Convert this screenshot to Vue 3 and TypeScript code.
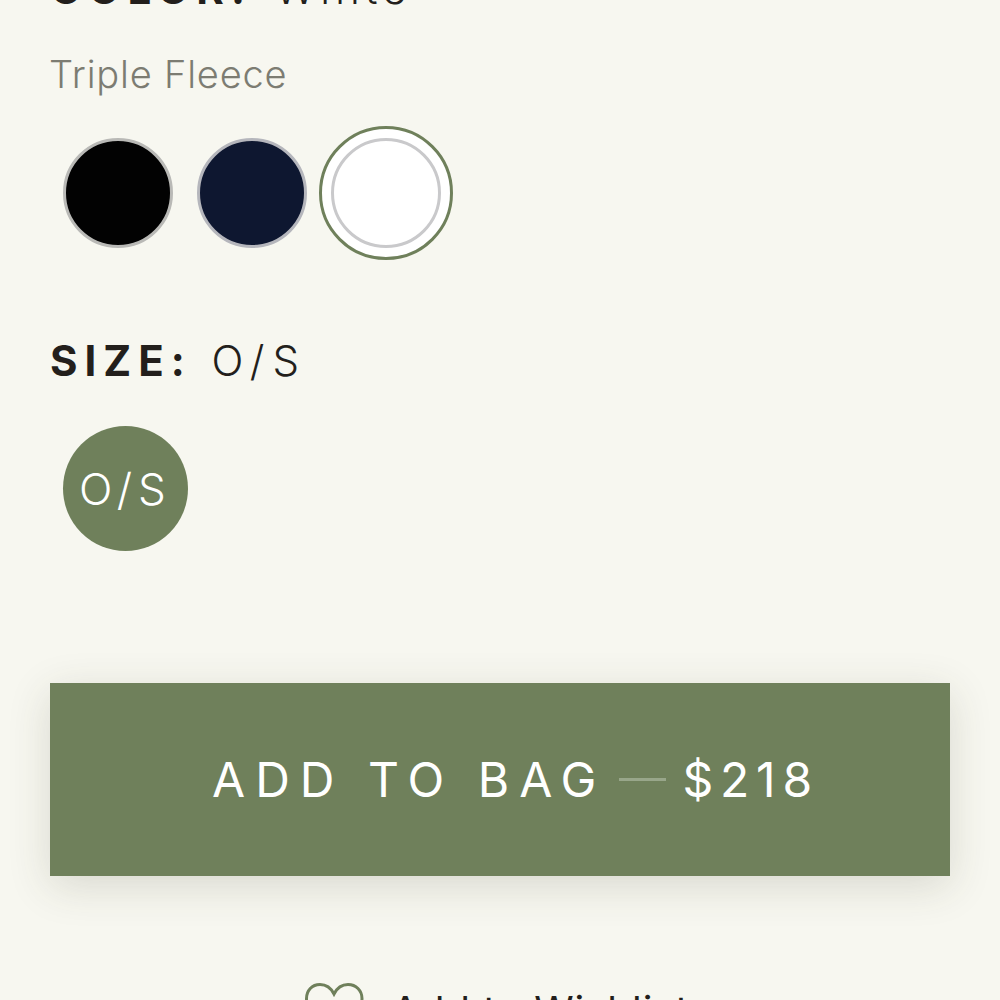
<script setup lang="ts">
  const swatches = [
    { name: 'Black', color: '#020202', ring: '#b9b9b6', selected: false },
    { name: 'Navy', color: '#0e1730', ring: '#b5b6bc', selected: false },
    { name: 'White', color: '#ffffff', ring: '#c9c9cb', selected: true },
  ]
</script>

<template>
  <div class="page">
    <div class="option-label color-label"><b>COLOR:</b> White</div>
    <div class="fabric">Triple Fleece</div>
    <div class="swatches">
      <div v-for="s in swatches" :key="s.name" class="swatch" :class="{ selected: s.selected }">
        <span class="dot" :style="{ background: s.color, borderColor: s.ring }"></span>
      </div>
    </div>

    <div class="option-label size-label"><b>SIZE:</b> O/S</div>
    <div class="size-chip">O/S</div>

    <button class="add-btn">
      <span class="add-text">ADD TO BAG</span>
      <i class="dash"></i>
      <span class="add-price">$218</span>
    </button>

    <div class="wishlist">
      <svg width="60" height="54" viewBox="0 0 60 54" fill="none">
        <path
          d="M29 11C26 5 21 1.5 15 1.5C7 1.5 1.5 7.5 1.5 15.5C1.5 28 15 39 29 51C43 39 57 28 57 15.5C57 7.5 51 1.5 43 1.5C37 1.5 32 5 29 11Z"
          stroke="#6f805b"
          stroke-width="3"
        />
      </svg>
      <span>Add to Wishlist</span>
    </div>
  </div>
</template>

<style>
  html,
  body {
    overflow: hidden;
    background: #f7f7f0;
  }
</style>

<style scoped>
  .page {
    width: 1000px;
    height: 1000px;
    overflow: hidden;
    box-sizing: border-box;
    padding: 0 50px;
    background: #f7f7f0;
    font-family: Inter, 'Liberation Sans', sans-serif;
    color: #231f1c;
  }

  .option-label {
    font-size: 42px;
    font-weight: 300;
    line-height: 50px;
    letter-spacing: 8px;
    white-space: nowrap;
  }

  .option-label b {
    font-weight: 700;
    letter-spacing: 7px;
  }

  .color-label {
    margin-top: -36px;
    letter-spacing: 5px;
  }

  .color-label b {
    margin-right: 6px;
  }

  .fabric {
    margin: 35px 0 0 -1px;
    font-size: 38px;
    font-weight: 300;
    line-height: 50px;
    letter-spacing: 0.8px;
    color: #7c7c72;
  }

  .swatches {
    display: flex;
    margin: 27px 0 0 0.5px;
  }

  .swatch {
    width: 134px;
    height: 134px;
    box-sizing: border-box;
    display: flex;
    align-items: center;
    justify-content: center;
    border-radius: 50%;
    border: 3px solid transparent;
  }

  .swatch.selected {
    border-color: #6f805b;
    background: #ffffff;
  }

  .dot {
    width: 110px;
    height: 110px;
    box-sizing: border-box;
    border-radius: 50%;
    border: 3px solid;
    filter: blur(0.6px);
  }

  .size-label {
    margin-top: 76px;
  }

  .size-chip {
    width: 125px;
    height: 125px;
    margin: 40px 0 0 13px;
    display: flex;
    align-items: center;
    justify-content: center;
    border-radius: 50%;
    background: #6f805b;
    color: #ffffff;
    font-size: 44px;
    font-weight: 300;
    letter-spacing: 6px;
  }

  .add-btn {
    width: 900px;
    height: 193px;
    margin-top: 132px;
    padding: 0 0 0 31px;
    display: flex;
    align-items: center;
    justify-content: center;
    gap: 22px;
    border: 0;
    background: #6f805b;
    color: #ffffff;
    font-family: inherit;
    font-size: 48px;
    font-weight: 400;
    box-shadow: 0 10px 40px rgba(60, 60, 40, 0.16);
  }

  .add-text {
    letter-spacing: 10px;
  }

  .add-price {
    letter-spacing: 6.8px;
  }

  .dash {
    width: 47px;
    height: 3px;
    margin-left: -9px;
    margin-right: -6px;
    background: #98a68a;
  }

  .wishlist {
    margin-top: 107px;
    padding-right: 5px;
    display: flex;
    align-items: flex-start;
    justify-content: center;
    gap: 26px;
    font-size: 40px;
    font-weight: 400;
    letter-spacing: 1px;
    line-height: 50px;
  }

  .wishlist span {
    margin-top: 3px;
  }
</style>
